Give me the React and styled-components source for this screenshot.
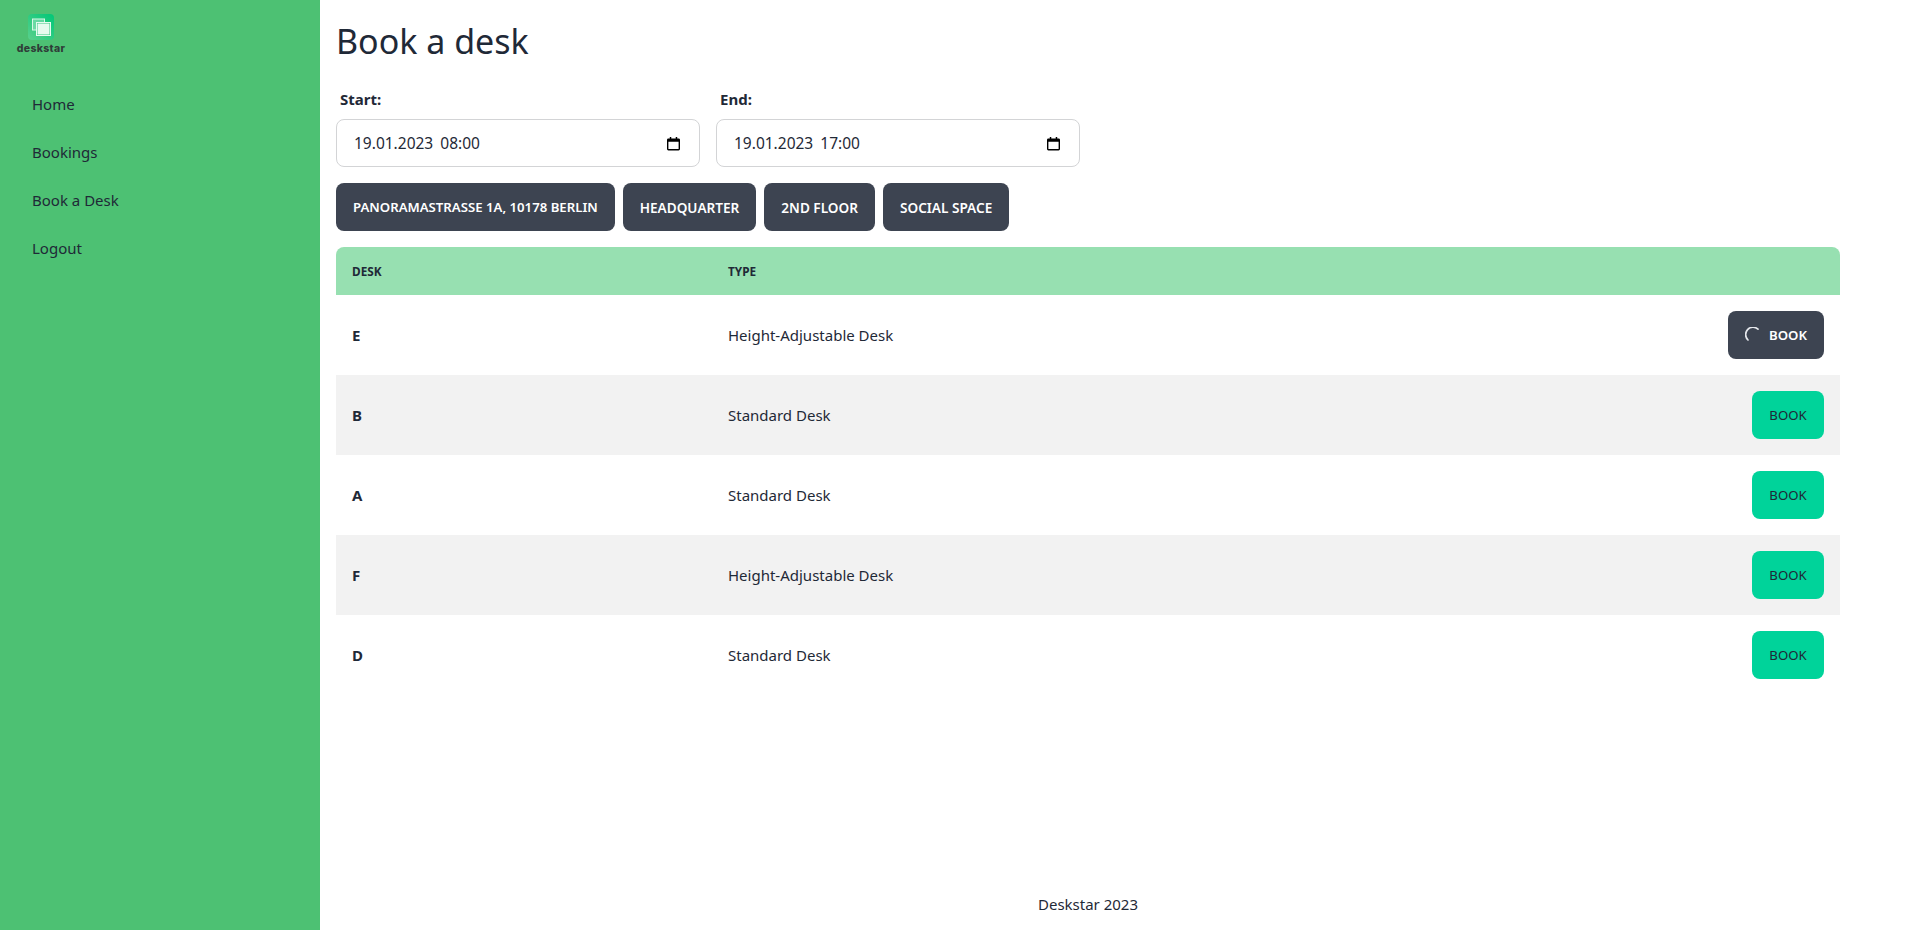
import React from "react";
import styled, { createGlobalStyle } from "styled-components";

const GlobalStyle = createGlobalStyle`
  html, body {
    margin: 0;
    height: 100%;
    background: #fff;
  }
  * {
    box-sizing: border-box;
  }
  body {
    font-family: "Noto Sans", "Open Sans", sans-serif;
    color: #1f2937;
  }
`;

const Layout = styled.div`
  display: flex;
  height: 100vh;
  overflow: hidden;
`;

const Sidebar = styled.aside`
  width: 320px;
  flex-shrink: 0;
  background-color: #4dc173;
  display: flex;
  flex-direction: column;
`;

const LogoBox = styled.div`
  display: flex;
  flex-direction: column;
  align-items: center;
  width: 50px;
  margin: 14px 0 0 16px;
  height: 66px;
`;

const LogoText = styled.span`
  font-family: "Inter", sans-serif;
  font-weight: 800;
  font-size: 10.5px;
  line-height: 13px;
  letter-spacing: 0.3px;
  margin-top: 2px;
  color: #2f3d38;
`;

const Nav = styled.nav`
  display: flex;
  flex-direction: column;
  padding: 0 16px;
`;

const NavLink = styled.a`
  display: block;
  padding: 12px 16px;
  font-size: 15px;
  line-height: 24px;
  color: #1f2937;
`;

const Main = styled.div`
  width: 1536px;
  flex-shrink: 0;
  display: flex;
  flex-direction: column;
`;

const Content = styled.main`
  flex: 1;
  padding: 16px 16px 0;
`;

const Title = styled.h1`
  margin: 5px 0 19px;
  font-size: 34px;
  font-weight: 400;
  line-height: 41px;
`;

const DateRow = styled.div`
  display: flex;
  gap: 16px;
`;

const Field = styled.div`
  width: 364px;
`;

const Label = styled.div`
  padding: 8px 4px 10px;
  font-size: 15px;
  line-height: 20px;
  font-weight: 700;
`;

const DateInput = styled.div`
  display: flex;
  align-items: center;
  justify-content: space-between;
  height: 48px;
  padding: 0 19px 0 17px;
  background: #fff;
  border: 1px solid #d3d4d6;
  border-radius: 8px;
  font-size: 15.5px;
  word-spacing: 3px;
  color: #1f2937;
`;

const Tags = styled.div`
  display: flex;
  gap: 8px;
  margin: 16px 0;
`;

const Tag = styled.div`
  display: flex;
  align-items: center;
  height: 48px;
  padding: 0 17px;
  border-radius: 8px;
  background: #3d4451;
  color: #fff;
  font-size: 13.2px;
  font-weight: 600;
  text-transform: uppercase;
  white-space: nowrap;
  & + & {
    font-size: 13.6px;
  }
`;

const TableWrap = styled.div`
  border-radius: 8px;
  overflow: hidden;
`;

const Table = styled.table`
  width: 100%;
  border-collapse: collapse;
  table-layout: fixed;
`;

const HeadCell = styled.th`
  height: 48px;
  padding: 0 16px;
  background: #97e0b1;
  font-size: 11.8px;
  font-weight: 700;
  text-align: left;
  text-transform: uppercase;
  color: #1f2937;
  width: ${(props) => props.$width || "auto"};
`;

const Row = styled.tr`
  background: ${(props) => (props.$even ? "#f2f2f2" : "#fff")};
`;

const Cell = styled.td`
  height: 80px;
  padding: 0 16px;
  font-size: 15px;
  font-weight: ${(props) => (props.$bold ? 700 : 400)};
  text-align: ${(props) => (props.$right ? "right" : "left")};
`;

const BookButton = styled.button`
  display: inline-flex;
  align-items: center;
  justify-content: center;
  vertical-align: middle;
  height: 48px;
  width: ${(props) => (props.$loading ? "96px" : "72px")};
  padding: 0;
  border: none;
  border-radius: 8px;
  background: ${(props) => (props.$loading ? "#3d4451" : "#00d39a")};
  color: ${(props) => (props.$loading ? "#fff" : "#1f2937")};
  font-family: inherit;
  font-size: 13.2px;
  font-weight: ${(props) => (props.$loading ? 600 : 400)};
  text-transform: uppercase;
`;

const Spinner = styled.svg`
  width: 16px;
  height: 16px;
  margin-right: 8px;
`;

const Footer = styled.footer`
  height: 50px;
  padding-top: 12px;
  text-align: center;
  font-size: 15px;
  line-height: 24px;
`;

const LogoIcon = () => (
  <svg width="26" height="26" viewBox="0 0 26 26">
    <defs>
      <linearGradient id="logoFill" x1="0" y1="1" x2="1" y2="0">
        <stop offset="0" stopColor="#5ad08c" />
        <stop offset="1" stopColor="#00c777" />
      </linearGradient>
    </defs>
    <rect width="26" height="26" rx="4" fill="url(#logoFill)" />
    <rect x="4.5" y="5" width="12" height="11" fill="#a4e8c6" fillOpacity="0.5" stroke="#d9f7e8" strokeWidth="1" />
    <rect x="9" y="9" width="13" height="12" fill="#e6fbf0" stroke="#3dc884" strokeWidth="1" />
    <rect x="8.5" y="8.5" width="14" height="13" fill="none" stroke="#e6fbf0" strokeWidth="1" />
  </svg>
);

const CalendarIcon = () => (
  <svg width="13" height="15" viewBox="0 0 14 15">
    <path d="M3 0.5h1.6v1.5h4.8V0.5H11v1.5h1.5A1.5 1.5 0 0 1 14 3.5v10a1.5 1.5 0 0 1-1.5 1.5h-11A1.5 1.5 0 0 1 0 13.500v-10A1.5 1.500 0 0 1 1.500 2H3z M1.500 5.500v8h11v-8z" fill="#000" fillRule="evenodd" />
  </svg>
);

const desks = [
  { name: "E", type: "Height-Adjustable Desk", loading: true },
  { name: "B", type: "Standard Desk" },
  { name: "A", type: "Standard Desk" },
  { name: "F", type: "Height-Adjustable Desk" },
  { name: "D", type: "Standard Desk" },
];

const tags = ["Panoramastrasse 1a, 10178 Berlin", "Headquarter", "2nd Floor", "Social Space"];

const App = () => {
  return (
    <Layout>
      <GlobalStyle />
      <Sidebar>
        <LogoBox>
          <LogoIcon />
          <LogoText>deskstar</LogoText>
        </LogoBox>
        <Nav>
          <NavLink>Home</NavLink>
          <NavLink>Bookings</NavLink>
          <NavLink>Book a Desk</NavLink>
          <NavLink>Logout</NavLink>
        </Nav>
      </Sidebar>
      <Main>
        <Content>
          <Title>Book a desk</Title>
          <DateRow>
            <Field>
              <Label>Start:</Label>
              <DateInput>
                19.01.2023 08:00
                <CalendarIcon />
              </DateInput>
            </Field>
            <Field>
              <Label>End:</Label>
              <DateInput>
                19.01.2023 17:00
                <CalendarIcon />
              </DateInput>
            </Field>
          </DateRow>
          <Tags>
            {tags.map((tag) => (
              <Tag key={tag}>{tag}</Tag>
            ))}
          </Tags>
          <TableWrap>
            <Table>
              <thead>
                <tr>
                  <HeadCell $width="376px">Desk</HeadCell>
                  <HeadCell $width="800px">Type</HeadCell>
                  <HeadCell />
                </tr>
              </thead>
              <tbody>
                {desks.map((desk, i) => (
                  <Row key={desk.name} $even={i % 2 === 1}>
                    <Cell $bold>{desk.name}</Cell>
                    <Cell>{desk.type}</Cell>
                    <Cell $right>
                      <BookButton $loading={desk.loading}>
                        {desk.loading && (
                          <Spinner viewBox="0 0 16 16">
                            <path d="M13 2.200A7 7 0 0 0 3 13" fill="none" stroke="#e5e7eb" strokeWidth="1.700" strokeLinecap="round" />
                          </Spinner>
                        )}
                        Book
                      </BookButton>
                    </Cell>
                  </Row>
                ))}
              </tbody>
            </Table>
          </TableWrap>
        </Content>
        <Footer>Deskstar 2023</Footer>
      </Main>
    </Layout>
  );
};

export default App;
